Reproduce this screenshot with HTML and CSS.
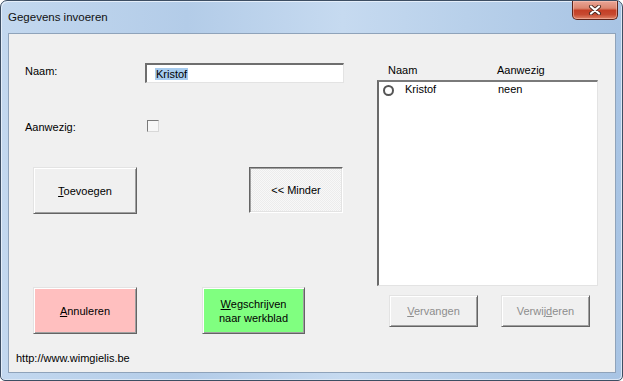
FILE: index.html
```html
<!DOCTYPE html>
<html>
<head>
<meta charset="utf-8">
<link rel="stylesheet" href="styles.css">
</head>
<body>
<div class="window">
  <div class="titlebar">
    <span class="title">Gegevens invoeren</span>
    <button class="close" aria-label="Sluiten">
      <svg width="14" height="10" viewBox="0 0 14 10">
        <path d="M3 1.5 L11 8.5 M11 1.5 L3 8.5" stroke="#4a2a22" stroke-width="4" stroke-linecap="round"/>
        <path d="M3 1.5 L11 8.5 M11 1.5 L3 8.5" stroke="#ffffff" stroke-width="2.2" stroke-linecap="round"/>
      </svg>
    </button>
  </div>
  <div class="content">
    <div class="col-left">
      <div class="row row-naam">
        <span class="label">Naam:</span>
        <div class="textbox"><span class="sel">Kristof</span></div>
      </div>
      <div class="row row-check">
        <span class="label label-check">Aanwezig:</span>
        <span class="checkbox"></span>
      </div>
      <div class="row row-btn1">
        <button class="btn btn-toev"><u>T</u>oevoegen</button>
        <button class="btn btn-minder">&lt;&lt; Minder</button>
      </div>
      <div class="row row-btn2">
        <button class="btn btn-annul"><u>A</u>nnuleren</button>
        <button class="btn btn-weg"><u>W</u>egschrijven<br>naar werkblad</button>
      </div>
      <div class="url">http://www.wimgielis.be</div>
    </div>
    <div class="col-right">
      <div class="list-head">
        <span class="lh-naam">Naam</span>
        <span>Aanwezig</span>
      </div>
      <div class="listbox">
        <div class="list-row">
          <span class="radio"></span>
          <span class="lr-naam">Kristof</span>
          <span class="lr-aanw">neen</span>
        </div>
      </div>
      <div class="row row-btn3">
        <button class="btn btn-small btn-disabled"><u>V</u>ervangen</button>
        <button class="btn btn-small btn-disabled">Verwij<u>d</u>eren</button>
      </div>
    </div>
  </div>
</div>
</body>
</html>
```

FILE: styles.css
```css
* { box-sizing: border-box; }
html, body { margin: 0; padding: 0; }
body {
  width: 623px;
  height: 381px;
  overflow: hidden;
  background: #ffffff;
  font-family: "Liberation Sans", Arial, sans-serif;
  font-size: 11px;
  color: #000;
}
.window {
  width: 623px;
  height: 381px;
  border: 1px solid #3d4e63;
  border-radius: 7px 7px 5px 5px;
  background: linear-gradient(to right, #c3d8ef 0%, #b3cce8 30%, #c6daf0 55%, #b8d0ea 75%, #a8c4e4 100%);
  box-shadow: inset 1px 1px 0 #e4eefa, inset -1px -1px 0 #dbe7f5;
  display: flex;
  flex-direction: column;
  padding: 0 6px 7px 7px;
}
.titlebar {
  height: 32px;
  display: flex;
  justify-content: space-between;
  align-items: flex-start;
  flex: none;
}
.title {
  font-family: "Liberation Sans", Arial, sans-serif;
  font-size: 11.5px;
  line-height: 14px;
  margin-top: 9px;
  color: #111;
}
.close {
  width: 46px;
  height: 19px;
  margin: 0 -2px 0 0;
  padding: 0;
  border: 1px solid #5e241a;
  border-top: none;
  border-radius: 0 0 5px 5px;
  background: linear-gradient(#e9a596 0%, #dc8670 40%, #c43f26 52%, #c74a31 75%, #df8468 100%);
  box-shadow: inset 0 0 0 1px rgba(255, 210, 200, 0.45);
  display: flex;
  align-items: center;
  justify-content: center;
}
.close svg { display: block; }
.content {
  height: 340px;
  border: 1px solid #8fa3ba;
  background: #f0f0f0;
  display: flex;
}
.col-left {
  width: 352px;
  flex: none;
}
.row { display: flex; }
.row-naam {
  margin-top: 29px;
  align-items: flex-start;
}
.label {
  width: 136px;
  padding-left: 16px;
  line-height: 13px;
  margin-top: 2px;
}
.textbox {
  width: 199px;
  height: 20px;
  background: #fff;
  border-top: 2px solid #6e6e6e;
  border-left: 2px solid #6e6e6e;
  border-right: 1px solid #e3e3e3;
  border-bottom: 1px solid #e3e3e3;
  padding: 3px 0 0 8px;
  line-height: 12px;
}
.sel {
  background: #a7ccef;
  padding: 0 1px;
  display: inline-block;
  line-height: 12px;
}
.row-check {
  margin-top: 37px;
  height: 12px;
  align-items: flex-start;
}
.label-check {
  width: 138px;
  margin-top: 1px;
}
.checkbox {
  width: 12px;
  height: 12px;
  background: #f7f7f7;
  border-top: 1px solid #7a7a7a;
  border-left: 1px solid #7a7a7a;
  border-right: 1px solid #d8d8d8;
  border-bottom: 1px solid #d8d8d8;
}
.btn {
  font-family: "Liberation Sans", Arial, sans-serif;
  font-size: 11px;
  color: #000;
  padding: 0;
  margin: 0;
  background: #f0f0f0;
  border-top: 1px solid #e3e3e3;
  border-left: 1px solid #e3e3e3;
  border-right: 1px solid #646464;
  border-bottom: 1px solid #646464;
  box-shadow: inset 1px 1px 0 #ffffff, inset -1px -1px 0 #a0a0a0;
  line-height: 14px;
  text-align: center;
}
.btn u { text-decoration: underline; text-underline-offset: 1px; }
.row-btn1 {
  margin-top: 35px;
  align-items: flex-start;
}
.btn-toev {
  margin-left: 24px;
  width: 104px;
  height: 47px;
}
.btn-minder {
  margin-left: 112px;
  width: 94px;
  height: 46px;
  background: repeating-conic-gradient(#f8f8f8 0 25%, #ececec 0 50%) 0 0 / 2px 2px;
  border-top: 1px solid #646464;
  border-left: 1px solid #646464;
  border-right: 1px solid #ffffff;
  border-bottom: 1px solid #ffffff;
  box-shadow: inset 1px 1px 0 #a0a0a0, inset -1px -1px 0 #e3e3e3;
}
.row-btn2 {
  margin-top: 73px;
  align-items: flex-start;
}
.btn-annul {
  margin-left: 24px;
  width: 104px;
  height: 47px;
  background: #ffbfbf;
}
.btn-weg {
  margin-left: 65px;
  width: 103px;
  height: 47px;
  background: #80ff80;
}
.url {
  margin-top: 18px;
  padding-left: 7px;
  line-height: 13px;
}
.col-right {
  flex: 1;
  padding-left: 16px;
}
.list-head {
  margin-top: 30px;
  height: 13px;
  line-height: 13px;
  margin-bottom: 3px;
  display: flex;
  padding-left: 11px;
}
.lh-naam { width: 109px; }
.listbox {
  width: 221px;
  height: 206px;
  background: #fff;
  border-top: 2px solid #7a7a7a;
  border-left: 2px solid #6a6a6a;
  border-right: 1px solid #e3e3e3;
  border-bottom: 1px solid #e3e3e3;
  padding: 3px 0 0 4px;
}
.list-row {
  display: flex;
  align-items: flex-start;
  height: 11px;
}
.radio {
  width: 11px;
  height: 11px;
  border: 2px solid #555;
  border-radius: 50%;
  background: #fff;
  flex: none;
}
.lr-naam, .lr-aanw {
  line-height: 13px;
  margin-top: -2px;
}
.lr-naam {
  margin-left: 11px;
  width: 93px;
}
.row-btn3 {
  margin-top: 9px;
  align-items: flex-start;
}
.btn-small {
  width: 89px;
  height: 32px;
}
.btn-small:first-child { margin-left: 12px; }
.btn-small + .btn-small { margin-left: 23px; }
.btn-disabled { color: #8d8d8d; }
```
